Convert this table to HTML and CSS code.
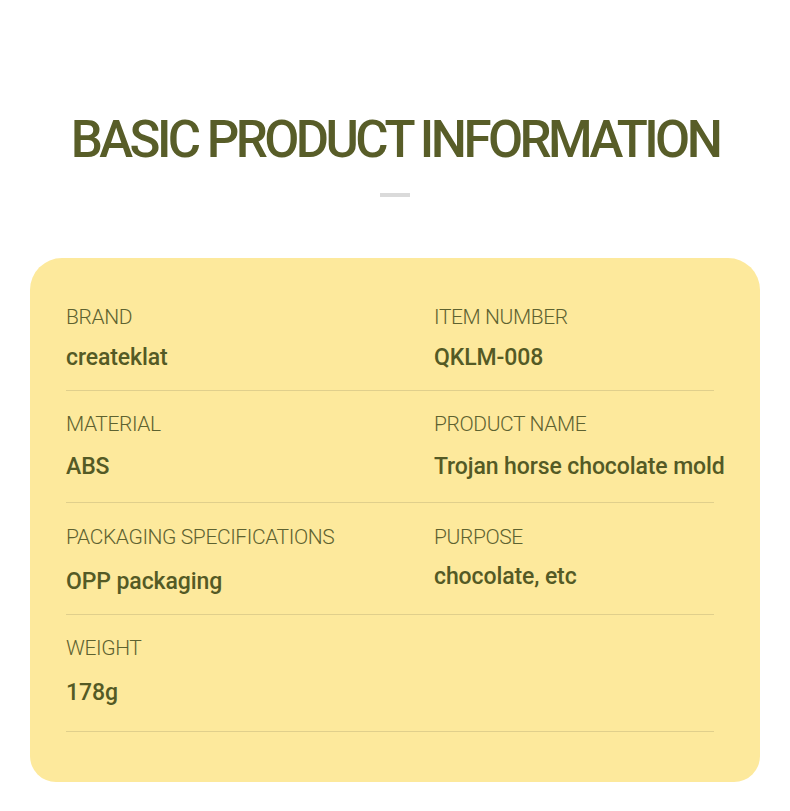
FILE: index.html
```html
<!DOCTYPE html>
<html>
<head>
<meta charset="utf-8">
<link rel="stylesheet" href="styles.css">
</head>
<body>
<div class="page">
  <h1 class="title">BASIC PRODUCT INFORMATION</h1>
  <div class="dash"></div>
  <div class="card">
    <div class="row r1">
      <div class="cell"><div class="label">BRAND</div><div class="value">createklat</div></div>
      <div class="cell"><div class="label">ITEM NUMBER</div><div class="value">QKLM-008</div></div>
    </div>
    <div class="row r2">
      <div class="cell"><div class="label">MATERIAL</div><div class="value">ABS</div></div>
      <div class="cell"><div class="label">PRODUCT NAME</div><div class="value">Trojan horse chocolate mold</div></div>
    </div>
    <div class="row r3">
      <div class="cell"><div class="label">PACKAGING SPECIFICATIONS</div><div class="value low">OPP packaging</div></div>
      <div class="cell"><div class="label">PURPOSE</div><div class="value">chocolate, etc</div></div>
    </div>
    <div class="row r4">
      <div class="cell"><div class="label">WEIGHT</div><div class="value low">178g</div></div>
      <div class="cell"></div>
    </div>
  </div>
</div>
</body>
</html>
```
FILE: styles.css
```css
html, body {
  margin: 0;
  padding: 0;
  background: #ffffff;
}
.page {
  width: 790px;
  height: 811px;
  display: flex;
  flex-direction: column;
  align-items: center;
  font-family: Roboto, "Liberation Sans", sans-serif;
}
.title {
  margin: 112px 0 0 0;
  font-size: 51px;
  line-height: 56px;
  font-weight: 500;
  color: #585d28;
  letter-spacing: -3.55px;
  white-space: nowrap;
}
.dash {
  width: 30px;
  height: 4px;
  background: #dadada;
  margin-top: 25px;
}
.card {
  box-sizing: border-box;
  width: 730px;
  margin-top: 61px;
  background: #fde99c;
  border-radius: 32px 32px 26px 26px;
  padding: 46px 46px 50px 36px;
  align-self: flex-start;
  margin-left: 30px;
}
.row {
  display: grid;
  grid-template-columns: 368px 1fr;
  border-bottom: 1px solid #e0cf8c;
  padding: 0 0 19px 0;
}
.row + .row {
  padding-top: 20px;
}
.row.r2 {
  padding-bottom: 22px;
}
.row.r3 {
  padding-top: 21px;
}
.row.r4 {
  padding-bottom: 25px;
}
.label {
  font-size: 21px;
  line-height: 26px;
  font-weight: 300;
  color: #5d6230;
  letter-spacing: -0.4px;
  white-space: nowrap;
}
.value {
  margin-top: 15px;
  font-size: 23px;
  line-height: 26px;
  font-weight: 500;
  color: #545a25;
  letter-spacing: -0.1px;
  white-space: nowrap;
}
.r2 .value {
  margin-top: 17px;
}
.value.low {
  margin-top: 19px;
}
.r3 .cell:last-child .value {
  margin-top: 14px;
}
```
